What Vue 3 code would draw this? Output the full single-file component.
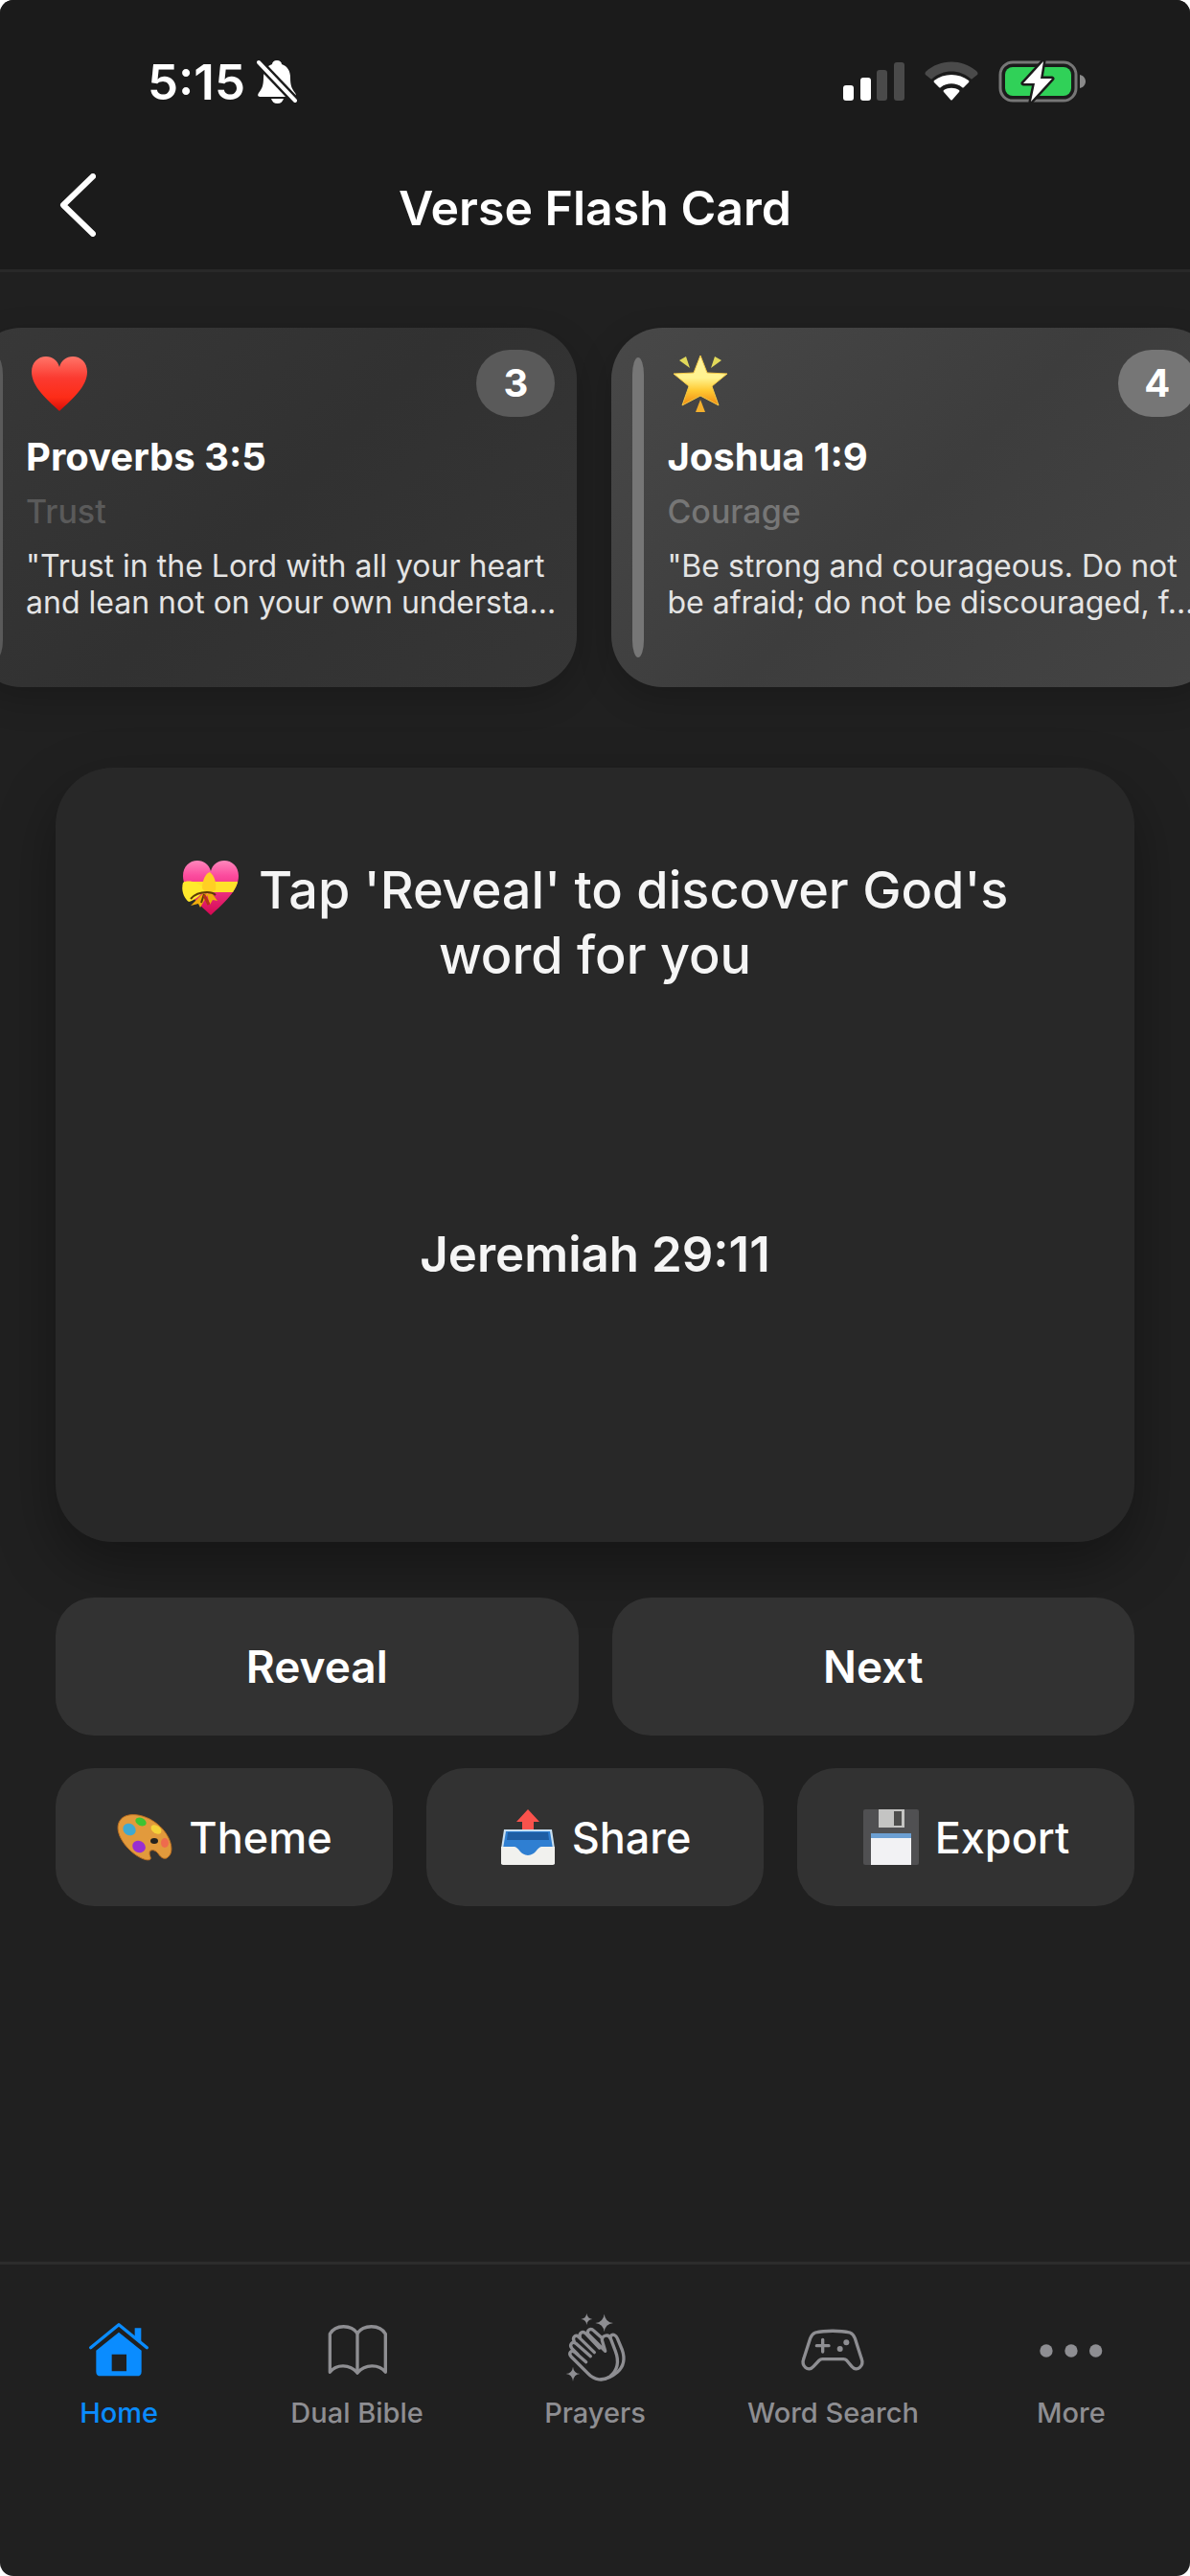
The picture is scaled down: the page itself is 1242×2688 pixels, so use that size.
<template>
  <div class="app">
    <header class="top">
      <div class="status-bar">
        <div class="status-left">
          <span class="time">5:15</span>
          <svg class="bell" viewBox="0 0 42 46" aria-label="Silent mode">
            <path d="M21 1c-3 0-5 2-5 4-6 2-9 7-9 14 0 9-2 12-5 16-2 3 0 4 2 4h34c2 0 4-1 2-4-3-4-5-7-5-16 0-7-3-12-9-14 0-2-2-4-5-4z" />
            <path d="M15 41h13c-1 3-3 5-6.500 5S16 44 15 41z" />
            <path class="slash-gap" d="M2 3l38 40" />
            <path class="slash" d="M2 3l38 40" />
          </svg>
        </div>
        <div class="status-right">
          <svg class="signal" viewBox="0 0 64 44" aria-label="Signal">
            <rect x="0" y="26" width="11" height="16" rx="3" />
            <rect x="18" y="18" width="11" height="24" rx="3" />
            <rect class="dim" x="35" y="10" width="11" height="32" rx="3" />
            <rect class="dim" x="53" y="2" width="11" height="40" rx="3" />
          </svg>
          <svg class="wifi" viewBox="0 0 56 44" aria-label="Wi-Fi">
            <path class="dim" d="M1 15Q0 14 1 12C16-2 40-2 55 12Q56 14 55 15L50 19Q49 20 48 19C37 9 19 9 8 19Q7 20 6 19z" />
            <path d="M10 23Q9 22 10 21C20 13 36 13 46 21Q47 22 46 23L41 28Q40 29 39 28C33 23 23 23 17 28Q16 29 15 28z" />
            <path d="M20 33Q19 32 20 31C25 28 31 28 36 31Q37 32 36 33L29 41Q28 42 27 41z" />
          </svg>
          <svg class="battery" viewBox="0 0 91 44" aria-label="Charging">
            <rect class="shell" x="2" y="2" width="79" height="40" rx="13" />
            <rect class="charge" x="7" y="7" width="69" height="30" rx="8" />
            <path class="tip" d="M85 15c4 1 6 4 6 7s-2 6-6 7z" />
            <path class="bolt" d="M47 1L26 24h12l-4 19L56 19H44z" />
          </svg>
        </div>
      </div>
      <div class="title-bar">
        <button class="back" aria-label="Back">
          <svg viewBox="0 0 38 66"><path d="M35 3L4 33l31 30" /></svg>
        </button>
        <h1>Verse Flash Card</h1>
      </div>
    </header>

    <main>
      <section class="carousel">
        <div class="track">
          <article v-for="v in verses" :key="v.id" class="slide" :class="v.tone">
            <div class="slide-top">
              <svg v-if="v.icon === 'heart'" class="emoji" viewBox="0 0 60 60">
                <defs>
                  <linearGradient id="heartFill" x1="0" y1="0" x2="0" y2="1">
                    <stop offset="0" stop-color="#ff7468" />
                    <stop offset="0.4" stop-color="#fb3a30" />
                    <stop offset="0.75" stop-color="#fd2c17" />
                    <stop offset="1" stop-color="#d70d08" />
                  </linearGradient>
                </defs>
                <path fill="url(#heartFill)" d="M30 59C16 46 1 33 1 18 1 8 8 2 16 2c7 0 12 4 14 11C32 6 37 2 44 2c8 0 15 6 15 16 0 15-15 28-29 41z" />
              </svg>
              <svg v-else class="emoji" viewBox="0 0 60 60">
                <defs>
                  <linearGradient id="starFill" x1="0" y1="0" x2="0" y2="1">
                    <stop offset="0" stop-color="#fff3a0" />
                    <stop offset="0.45" stop-color="#fff38e" />
                    <stop offset="0.7" stop-color="#ffc932" />
                    <stop offset="1" stop-color="#f08a12" />
                  </linearGradient>
                </defs>
                <path fill="url(#starFill)" stroke="#f5c945" stroke-linejoin="round" d="M30 1l7 18 21 1-16 13 7 20-19-10-19 10 7-20L2 20l21-1z" />
                <path fill="#e2d95a" d="M8 6l7-4 4 12zM52 6l-7-4-4 12z" />
                <path fill="#f3b02e" d="M30 47l5 13H25z" />
              </svg>
              <span class="badge">{{ v.id }}</span>
            </div>
            <h2>{{ v.reference }}</h2>
            <p class="category">{{ v.category }}</p>
            <p class="quote">{{ v.preview }}</p>
          </article>
        </div>
      </section>

      <section class="flash-card">
        <p class="prompt">
          <svg class="emoji gift" viewBox="0 0 60 60">
            <defs>
              <linearGradient id="giftFill" x1="0" y1="0" x2="0" y2="1">
                <stop offset="0" stop-color="#ff8fc0" />
                <stop offset="0.3" stop-color="#fb4a9d" />
                <stop offset="1" stop-color="#d3064f" />
              </linearGradient>
              <clipPath id="giftClip">
                <path d="M30 59C16 46 1 33 1 18 1 8 8 2 16 2c7 0 12 4 14 11C32 6 37 2 44 2c8 0 15 6 15 16 0 15-15 28-29 41z" />
              </clipPath>
            </defs>
            <g clip-path="url(#giftClip)">
              <rect width="60" height="60" fill="url(#giftFill)" />
              <path d="M0 24h60v11H0z" fill="#ffe12a" />
            </g>
            <path d="M24 32C16 23 5 22 1 25c-2 7 0 15 6 20 5-1 12-6 17-13z" fill="#ffe92c" />
            <path d="M21 31c0-9 4-16 8-17 5 4 7 11 6 19l-9 4z" fill="#ffcf24" />
            <path d="M22 36L9 49l8-2 2 4 8-14zM26 37l3 11 3-5 5 1-6-8z" fill="#efac0b" />
            <path d="M9 42c5-6 11-7 17-7 4 0 7 1 9 3M23 37l-3 9" fill="none" stroke="#5d3b06" stroke-width="2" />
            <path d="M23 38l5 10" stroke="#b5301a" stroke-width="3" />
          </svg>
          Tap 'Reveal' to discover God's word for you
        </p>
        <p class="reference">Jeremiah 29:11</p>
      </section>

      <section class="actions">
        <div class="row">
          <button class="primary">Reveal</button>
          <button class="primary">Next</button>
        </div>
        <div class="row">
          <button>
            <svg class="emoji" viewBox="0 0 60 60">
              <path d="M4 13C10 3 30 5 44 17c12 10 17 25 12 32-4 6-9 3-12-2-3-4-9-5-9 0 0 3 2 4 1 6-3 3-14-2-22-10C4 33-1 21 4 13z" fill="#e29a3c" stroke="#b86d21" />
              <ellipse cx="14" cy="22" rx="7" ry="6" fill="#41a9d0" transform="rotate(35 14 22)" />
              <ellipse cx="26" cy="14" rx="6" ry="4" fill="#3fc432" transform="rotate(25 26 14)" />
              <ellipse cx="42" cy="22" rx="6" ry="4" fill="#f6d238" transform="rotate(35 42 22)" />
              <ellipse cx="51" cy="36" rx="4" ry="5" fill="#ee6b4d" />
              <ellipse cx="24" cy="40" rx="7" ry="6" fill="#9a2fd1" transform="rotate(25 24 40)" />
              <ellipse cx="40" cy="34" rx="4" ry="3" fill="#24221e" />
            </svg>
            Theme
          </button>
          <button>
            <svg class="emoji" viewBox="0 0 60 60">
              <path d="M5 22h50l3 20v16H2V42z" fill="#c9dff0" />
              <path d="M7 24h46l3 18v8H4v-8z" fill="#2f7fd2" />
              <path d="M9 25h42l1 8H8z" fill="#1f5ea4" />
              <path d="M2 40h14c4 0 6 9 14 9s10-9 14-9h14v17q0 2-2 2H4q-2 0-2-2z" fill="#f1f1ee" />
              <path d="M30 1l12 13h-6v8H24v-8h-6z" fill="#f9524c" />
            </svg>
            Share
          </button>
          <button>
            <svg class="emoji" viewBox="0 0 60 60">
              <path d="M3 1h54q2 0 2 2v54q0 2-2 2H3q-2 0-2-2V3q0-2 2-2z" fill="#505052" />
              <rect x="17" y="1" width="27" height="19" fill="#c4c4c3" />
              <rect x="33" y="3" width="8" height="15" fill="#4d4d4c" />
              <rect x="9" y="26" width="42" height="33" fill="#f2f2f4" />
              <rect x="9" y="26" width="42" height="5" fill="#6c9fd2" />
            </svg>
            Export
          </button>
        </div>
      </section>
    </main>

    <nav class="tabs">
      <a v-for="tab in tabs" :key="tab.label" href="#" class="tab" :class="{ active: tab.active }">
        <svg viewBox="0 0 228 228">
          <path v-for="(d, i) in tab.fills" :key="'f' + i" class="fill" :d="d" fill-rule="evenodd" />
          <path v-for="(d, i) in tab.lines" :key="'l' + i" class="line" :d="d" />
        </svg>
        <span>{{ tab.label }}</span>
      </a>
    </nav>
  </div>
</template>

<script setup>
const verses = [
  {
    id: 3,
    icon: 'heart',
    tone: 'dark',
    reference: 'Proverbs 3:5',
    category: 'Trust',
    preview: '"Trust in the Lord with all your heart and lean not on your own understa...'
  },
  {
    id: 4,
    icon: 'star',
    tone: 'light',
    reference: 'Joshua 1:9',
    category: 'Courage',
    preview: '"Be strong and courageous. Do not be afraid; do not be discouraged, f...'
  }
];

// Tab icons: filled shapes and stroked lines on a 228 unit grid
const tabs = [
  {
    label: 'Home',
    active: true,
    fills: [
      'M114 59L185 116V182Q185 196 171 196H57Q43 196 43 182V116ZM92 128V181H138V128Z',
      'M164 46H184V90L164 74Z'
    ],
    lines: ['M26 107L114 35L202 107']
  },
  {
    label: 'Dual Bible',
    fills: [],
    lines: [
      'M28 184V64C46 34 94 34 114 62C134 34 184 34 202 64V184C182 158 138 158 114 186C90 158 48 158 28 184Z',
      'M114 62V186'
    ]
  },
  {
    label: 'Prayers',
    fills: [
      'M88 0Q90 16 106 18Q90 20 88 36Q86 20 70 18Q86 16 88 0Z',
      'M143 2Q146 27 171 30Q146 33 143 58Q140 33 115 30Q140 27 143 2Z',
      'M45 167Q47 187 67 189Q47 191 45 213Q43 191 23 189Q43 187 45 167Z'
    ],
    lines: [
      'M86 152L50 121C40 113 30 124 39 135L92 188C112 210 140 212 160 198C188 176 190 150 178 118L162 76',
      'M100 134L54 94C43 86 32 98 42 110L60 128',
      'M112 122L62 73C52 64 42 76 49 88',
      'M128 108L84 62C75 54 63 62 67 75',
      'M137 78L110 54C101 44 88 52 92 64L146 118L136 84C134 70 156 62 162 78',
      'M162 72C170 62 180 68 184 78L199 114C208 140 204 166 184 184C170 196 156 206 134 206'
    ]
  },
  {
    label: 'Word Search',
    fills: [
      'M128 111a9 9 0 1 0 18 0a9 9 0 1 0 -18 0Z',
      'M148 91a9 9 0 1 0 18 0a9 9 0 1 0 -18 0Z'
    ],
    lines: [
      'M60 60C90 53 138 53 168 60C176 63 180 68 184 78L204 140C214 166 190 184 174 166L158 147Q154 143 148 143H82Q76 143 72 147L54 166C38 184 14 166 24 140L44 78C48 68 52 63 60 60Z',
      'M83 82V120M64 101H102'
    ]
  },
  {
    label: 'More',
    fills: [
      'M16 117a20 20 0 1 0 40 0a20 20 0 1 0 -40 0Z',
      'M94 117a20 20 0 1 0 40 0a20 20 0 1 0 -40 0Z',
      'M171 117a20 20 0 1 0 40 0a20 20 0 1 0 -40 0Z'
    ],
    lines: []
  }
];
</script>

<style>
body {
  background: #fff;
}
</style>

<style scoped>
.app {
  display: flex;
  flex-direction: column;
  min-height: 100vh;
  overflow: hidden;
  border-radius: 14px;
  background: #202020;
  color: #fff;
  font-family: Inter, "Liberation Sans", sans-serif;
}

h1,
h2,
p {
  margin: 0;
}

button {
  border: 0;
  color: inherit;
  font-family: inherit;
}

.top {
  background: #1b1b1b;
  border-bottom: 3px solid #292929;
}

.status-bar {
  display: flex;
  align-items: center;
  justify-content: space-between;
  height: 134px;
  padding: 18px 109px 0 154px;
}

.status-left,
.status-right {
  display: flex;
  align-items: center;
}

.status-left {
  gap: 12px;
}

.status-right {
  gap: 21px;
}

.time {
  font-size: 51px;
  font-weight: 600;
}

.bell {
  width: 42px;
  height: 46px;
  fill: #fff;
}

.slash-gap {
  stroke: #1b1b1b;
  stroke-width: 9;
}

.slash {
  stroke: #fff;
  stroke-width: 4;
  stroke-linecap: round;
}

.signal {
  width: 64px;
  height: 44px;
  fill: #fff;
}

.wifi {
  width: 56px;
  height: 44px;
  fill: #fff;
}

.dim {
  fill: #4a4a4a;
}

.battery {
  width: 91px;
  height: 44px;
}

.shell {
  fill: none;
  stroke: #767676;
  stroke-width: 3;
}

.charge {
  fill: #30d158;
}

.tip {
  fill: #8a8a8a;
}

.bolt {
  fill: #fff;
  stroke: #1b1b1b;
  stroke-width: 5;
  stroke-linejoin: round;
  paint-order: stroke;
}

.title-bar {
  display: grid;
  grid-template-columns: 100px 1fr 100px;
  align-items: center;
  height: 129px;
}

.back {
  display: flex;
  justify-content: flex-end;
  padding: 0 0 6px;
  background: none;
}

.back svg {
  width: 38px;
  height: 66px;
  fill: none;
  stroke: #fff;
  stroke-width: 6;
  stroke-linecap: round;
  stroke-linejoin: round;
}

h1 {
  text-align: center;
  font-size: 50px;
  font-weight: 600;
}

.emoji {
  flex: none;
  width: 60px;
  height: 60px;
}

/* Carousel, scrolled part of the way into the third card */
.carousel {
  overflow: hidden;
  padding: 58px 0 84px;
}

.track {
  display: flex;
  gap: 36px;
  margin-left: -31px;
}

.slide {
  position: relative;
  flex: 0 0 51vw;
  box-sizing: border-box;
  min-height: 375px;
  padding: 23px 8px 23px 58px;
  border-radius: 54px;
  box-shadow: 0 12px 36px rgba(0, 0, 0, 0.2);
}

.slide.dark {
  --accent: #5a5a5a;
  background: linear-gradient(135deg, #383838, #313131 50%, #363636);
}

.slide.light {
  --accent: #767676;
  background: linear-gradient(135deg, #484848, #3d3d3d 50%, #444);
}

.slide::before {
  content: "";
  position: absolute;
  top: 31px;
  bottom: 31px;
  left: 22px;
  width: 12px;
  border-radius: 6px / 18px;
  background: var(--accent);
}

.slide-top {
  display: flex;
  align-items: center;
  justify-content: space-between;
  padding: 0 15px 0 5px;
}

.badge {
  box-sizing: border-box;
  min-width: 82px;
  border-radius: 35px;
  background: var(--accent);
  text-align: center;
  font-size: 40px;
  font-weight: 700;
  line-height: 70px;
}

h2 {
  margin-top: 17px;
  font-size: 40px;
  font-weight: 700;
  line-height: 50px;
}

.category {
  margin-top: 10px;
  color: var(--accent);
  font-size: 34px;
  font-weight: 500;
  line-height: 44px;
}

.quote {
  margin-top: 16px;
  color: #e4e4e4;
  font-size: 32px;
  line-height: 38px;
}

.flash-card {
  box-sizing: border-box;
  min-height: 808px;
  margin: 0 58px;
  padding: 94px 110px 0;
  border-radius: 60px;
  background: #282828;
  box-shadow: 0 24px 60px rgba(0, 0, 0, 0.35);
  color: #f5f5f5;
  text-align: center;
}

.prompt {
  font-size: 54px;
  font-weight: 500;
  line-height: 68px;
}

.gift {
  margin-right: 6px;
  vertical-align: -8px;
}

.reference {
  margin-top: 248px;
  font-size: 51px;
  font-weight: 600;
  line-height: 60px;
}

.actions {
  position: relative;
  display: flex;
  flex-direction: column;
  gap: 34px;
  padding: 58px 58px 0;
}

.row {
  display: flex;
  gap: 35px;
}

.row button {
  display: flex;
  flex: 1;
  align-items: center;
  justify-content: center;
  gap: 16px;
  height: 144px;
  padding: 0;
  border-radius: 40px;
  background: #323232;
  font-size: 45px;
  font-weight: 500;
}

.row .primary {
  font-size: 46px;
  font-weight: 600;
}

.tabs {
  display: flex;
  margin-top: auto;
  padding: 51px 0 152px;
  border-top: 3px solid #2c2c2c;
}

.tab {
  display: flex;
  flex: 1;
  flex-direction: column;
  align-items: center;
  gap: 10px;
  color: #8e8e92;
  font-size: 29px;
  font-weight: 500;
  line-height: 36px;
  text-decoration: none;
}

.tab svg {
  width: 76px;
  height: 76px;
  overflow: visible;
}

.tab.active {
  color: #0a8cff;
}

.fill {
  fill: currentColor;
}

.line {
  fill: none;
  stroke: currentColor;
  stroke-width: 10;
  stroke-linecap: round;
  stroke-linejoin: round;
}
</style>
